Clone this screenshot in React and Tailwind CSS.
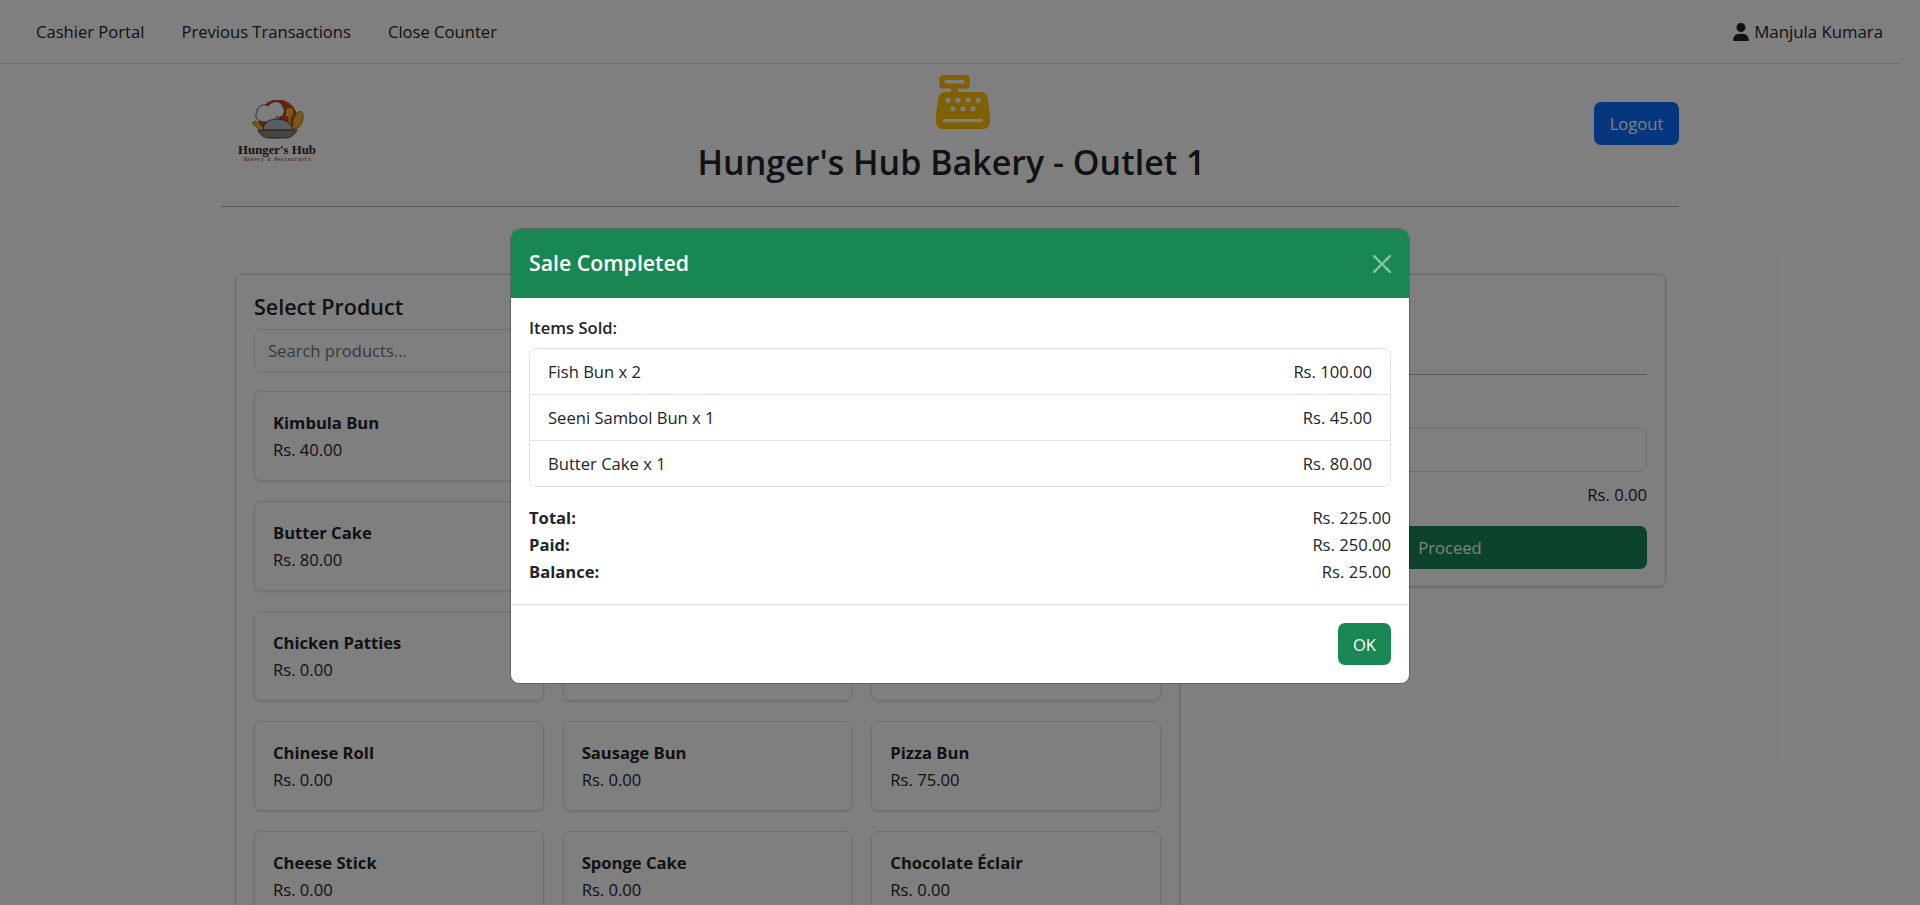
import React from 'react';
import { FaCashRegister, FaUser, FaCheck } from 'react-icons/fa6';

const products = [
  { name: 'Kimbula Bun', price: '40.00' },
  { name: 'Fish Bun', price: '50.00' },
  { name: 'Seeni Sambol Bun', price: '45.00' },
  { name: 'Butter Cake', price: '80.00' },
  { name: 'Egg Bun', price: '60.00' },
  { name: 'Tea Bun', price: '40.00' },
  { name: 'Chicken Patties', price: '0.00' },
  { name: 'Fish Patties', price: '0.00' },
  { name: 'Vegetable Roti', price: '0.00' },
  { name: 'Chinese Roll', price: '0.00' },
  { name: 'Sausage Bun', price: '0.00' },
  { name: 'Pizza Bun', price: '75.00' },
  { name: 'Cheese Stick', price: '0.00' },
  { name: 'Sponge Cake', price: '0.00' },
  { name: 'Chocolate Éclair', price: '0.00' },
];

const soldItems = [
  { name: 'Fish Bun x 2', total: 'Rs. 100.00' },
  { name: 'Seeni Sambol Bun x 1', total: 'Rs. 45.00' },
  { name: 'Butter Cake x 1', total: 'Rs. 80.00' },
];

const summary = [
  { label: 'Total:', value: 'Rs. 225.00' },
  { label: 'Paid:', value: 'Rs. 250.00' },
  { label: 'Balance:', value: 'Rs. 25.00' },
];

const Logo = () => (
  <svg width="80" height="64" viewBox="0 0 80 64" className="block">
    <circle cx="40" cy="19" r="19.5" fill="#d8401c" />
    {/* whisk, spatula, spoon */}
    <path d="M14 23l4-2 8 7-3 3z" fill="#f0b429" stroke="#4a3a10" strokeWidth="0.6" />
    <rect x="48" y="8" width="7" height="9" rx="2.5" fill="#f0b429" />
    <rect x="50.5" y="16" width="2" height="9" fill="#f0b429" />
    <ellipse cx="60" cy="20" rx="4.5" ry="9" transform="rotate(20 60 20)" fill="#f0b429" stroke="#4a3a10" strokeWidth="0.5" />
    <rect x="53" y="26" width="2.4" height="6" transform="rotate(20 54 29)" fill="#f0b429" />
    {/* chef hat */}
    <path d="M25 22c-6-1-9-6-6-10 0-6 7-9 11-6 4-6 13-6 15 1 3 3 1 9-3 10l-1 5z" fill="#fafafa" stroke="#333" strokeWidth="0.8" />
    {/* cloche and plate */}
    <path d="M25 30c0-7 6-11 14-11s15 4 15 11z" fill="#b5bcc6" stroke="#333" strokeWidth="0.8" />
    <circle cx="39.5" cy="18" r="1.6" fill="#b5bcc6" stroke="#333" strokeWidth="0.6" />
    <path d="M20 30h39c-2 5-7 8-11 8H31c-5 0-9-3-11-8z" fill="#8a8a80" stroke="#333" strokeWidth="0.8" />
    <text x="39" y="54" textAnchor="middle" fontFamily="Liberation Serif, serif" fontWeight="700" fontSize="12.8" fill="#3a2416">Hunger's Hub</text>
    <text x="39.5" y="61" textAnchor="middle" fontFamily="Liberation Mono, monospace" fontSize="5.6" fill="#c0392b">Bakery &amp; Restaurants</text>
  </svg>
);

const CloseIcon = () => (
  <svg width="18" height="18" viewBox="0 0 16 16" fill="#fff" className="block opacity-50">
    <path d="M.293.293a1 1 0 0 1 1.414 0L8 6.586 14.293.293a1 1 0 1 1 1.414 1.414L9.414 8l6.293 6.293a1 1 0 0 1-1.414 1.414L8 9.414l-6.293 6.293a1 1 0 0 1-1.414-1.414L6.586 8 .293 1.707a1 1 0 0 1 0-1.414z" />
  </svg>
);

const App = () => {
  return (
    <div className="relative h-[905px] overflow-hidden bg-white text-[#212529] text-[16.6px] leading-[27px] font-['Open_Sans',sans-serif]">
      <div className="w-[1900px]">
        {/* Navbar */}
        <nav className="flex h-16 items-center justify-between border-b border-[#dee2e6] pl-9 pr-[17px]">
          <div className="flex gap-[37px]">
            <a>Cashier Portal</a>
            <a>Previous Transactions</a>
            <a>Close Counter</a>
          </div>
          <div className="flex items-center gap-[5px]">
            <FaUser className="h-[18px] w-4" />
            <span className="text-[16.8px]">Manjula Kumara</span>
          </div>
        </nav>

        <div className="mx-auto w-[1458px]">
          {/* Header */}
          <div className="grid h-[143px] grid-cols-[1fr_auto_1fr] border-b border-[#adb5bd]">
            <div className="pl-[17px] pt-9">
              <Logo />
            </div>
            <div className="flex flex-col items-center pt-[11px]">
              <FaCashRegister className="ml-[26px] h-[54px] w-[54px] text-[#ffc107]" />
              <h1 className="ml-[3px] mt-[11px] text-[34px] font-semibold leading-[44px] text-[#212529]">Hunger's Hub Bakery - Outlet 1</h1>
            </div>
            <div className="flex justify-end pt-[38px]">
              <button className="h-[43px] w-[85px] rounded-[7px] bg-[#0d6efd] text-white">Logout</button>
            </div>
          </div>

          <div className="mt-[67px] flex gap-[28px] pl-[14px]">
            {/* Product list */}
            <div className="w-[945px] shrink-0 rounded-[7px] border border-[#ced4da] px-[18px] pt-[17px] shadow-sm">
              <h4 className="text-[21.5px] font-semibold leading-[29px]">Select Product</h4>
              <div className="mt-[8px] flex h-[44px] items-center rounded-[7px] border border-[#dee2e6] px-[13px] pb-[2px] text-[#6c757d]">Search products...</div>
              <div className="mt-[18px] grid grid-cols-3 gap-x-[19px] gap-y-[20px]">
                {products.map((product) => (
                  <div key={product.name} className="h-[90px] rounded-[7px] border border-[#dee2e6] px-[18px] pt-[17px] shadow-sm">
                    <div className="font-bold">{product.name}</div>
                    <div>Rs. {product.price}</div>
                  </div>
                ))}
              </div>
            </div>

            {/* Cart */}
            <div className="h-[313px] w-[458px] shrink-0 rounded-[7px] border border-[#ced4da] px-[18px] pt-[18px] shadow-sm">
              <h4 className="text-[21.5px] font-semibold leading-[29px]">Cart</h4>
              <div className="mt-[52px] border-t border-[#adb5bd]"></div>
              <div className="mt-[26px] text-[16px] leading-[27px]">Cash</div>
              <div className="h-[44px] rounded-[7px] border border-[#dee2e6]"></div>
              <div className="mt-[9px] text-right">Rs. 0.00</div>
              <button className="mt-[18px] flex h-[43px] w-full items-center justify-center gap-2 rounded-[7px] bg-[#198754] text-white">
                <FaCheck className="h-[18px] w-[18px]" />
                Proceed
              </button>
            </div>
          </div>
        </div>
      </div>

      {/* Backdrop + modal */}
      <div className="absolute inset-0 flex justify-center bg-black/50 pt-[228px]">
        <div className="h-[456px] w-[900px] overflow-hidden rounded-[9px] border border-black/20 bg-white bg-clip-padding">
          <div className="flex h-[69px] items-center justify-between bg-[#198754] px-[18px] text-white">
            <h5 className="pb-[2px] text-[21.3px] font-semibold">Sale Completed</h5>
            <CloseIcon />
          </div>
          <div className="h-[307px] border-b border-[#dee2e6] px-[18px] pt-[16px]">
            <div className="font-semibold">Items Sold:</div>
            <ul className="mt-[7px] rounded-[7px] border border-[#dee2e6]">
              {soldItems.map((item) => (
                <li key={item.name} className="flex h-[46px] items-center justify-between border-b border-[#dee2e6] pl-[18px] pr-[18px] last:h-[45px] last:border-b-0">
                  <span>{item.name}</span>
                  <span>{item.total}</span>
                </li>
              ))}
            </ul>
            <div className="mt-[17px]">
              {summary.map((row) => (
                <div key={row.label} className="flex justify-between">
                  <span className="font-bold">{row.label}</span>
                  <span>{row.value}</span>
                </div>
              ))}
            </div>
          </div>
          <div className="flex justify-end px-[18px] pt-[18px]">
            <button className="h-[42px] w-[53px] rounded-[7px] bg-[#198754] text-white">OK</button>
          </div>
        </div>
      </div>
    </div>
  );
};

export default App;
